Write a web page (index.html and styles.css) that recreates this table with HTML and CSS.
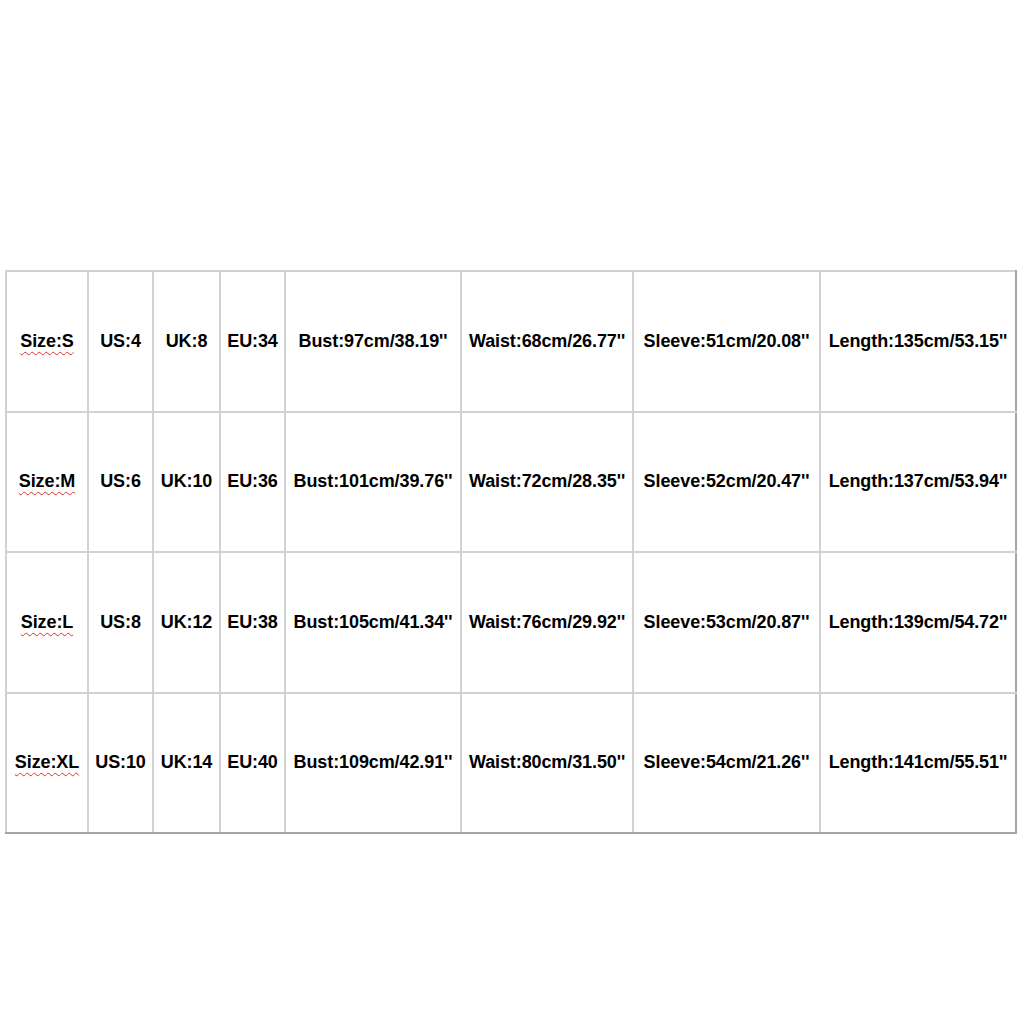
FILE: index.html
```html
<!DOCTYPE html>
<html>
<head>
<meta charset="utf-8">
<link rel="stylesheet" href="styles.css">
</head>
<body>
<table class="size-table">
  <colgroup>
    <col class="c-size"><col class="c-us"><col class="c-uk"><col class="c-eu">
    <col class="c-bust"><col class="c-waist"><col class="c-sleeve"><col class="c-length">
  </colgroup>
  <tr>
    <td><span class="spell">Size:S</span></td><td>US:4</td><td>UK:8</td><td>EU:34</td>
    <td>Bust:97cm/38.19''</td><td>Waist:68cm/26.77''</td><td>Sleeve:51cm/20.08''</td><td>Length:135cm/53.15''</td>
  </tr>
  <tr>
    <td><span class="spell">Size:M</span></td><td>US:6</td><td>UK:10</td><td>EU:36</td>
    <td>Bust:101cm/39.76''</td><td>Waist:72cm/28.35''</td><td>Sleeve:52cm/20.47''</td><td>Length:137cm/53.94''</td>
  </tr>
  <tr>
    <td><span class="spell">Size:L</span></td><td>US:8</td><td>UK:12</td><td>EU:38</td>
    <td>Bust:105cm/41.34''</td><td>Waist:76cm/29.92''</td><td>Sleeve:53cm/20.87''</td><td>Length:139cm/54.72''</td>
  </tr>
  <tr>
    <td><span class="spell">Size:XL</span></td><td>US:10</td><td>UK:14</td><td>EU:40</td>
    <td>Bust:109cm/42.91''</td><td>Waist:80cm/31.50''</td><td>Sleeve:54cm/21.26''</td><td>Length:141cm/55.51''</td>
  </tr>
</table>
</body>
</html>
```
FILE: styles.css
```css
html, body {
  margin: 0;
  padding: 0;
  background: #ffffff;
}
body {
  padding-top: 270px;
  padding-left: 5px;
  font-family: "Liberation Sans", Arial, sans-serif;
}
.size-table {
  border-collapse: collapse;
  table-layout: fixed;
  width: 1010px;
}
.size-table td {
  height: 138.5px;
  padding: 0;
  border: 2px solid #d2d2d2;
  text-align: center;
  vertical-align: middle;
  font-weight: bold;
  font-size: 18px;
  color: #000000;
  white-space: nowrap;
  letter-spacing: -0.1px;
}
.size-table tr:last-child td {
  border-bottom-color: #a6a6a6;
}
.size-table td:last-child {
  border-right-color: #a6a6a6;
}
.c-size { width: 82px; }
.c-us { width: 65px; }
.c-uk { width: 67px; }
.c-eu { width: 65px; }
.c-bust { width: 176px; }
.c-waist { width: 172px; }
.c-sleeve { width: 187px; }
.c-length { width: 196px; }
.spell {
  text-decoration: underline wavy #d83030;
  text-decoration-thickness: 1px;
  text-underline-offset: 4px;
}
```
